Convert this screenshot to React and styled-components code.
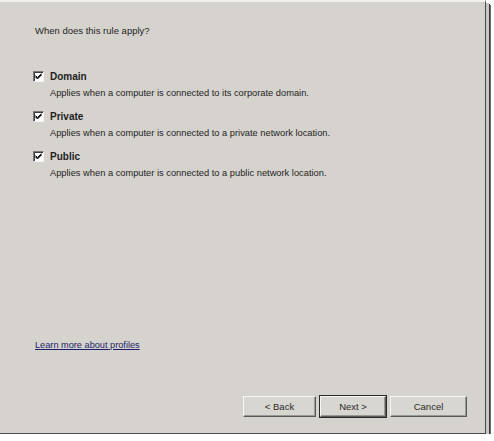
import React from 'react';
import styled, { createGlobalStyle } from 'styled-components';

const GlobalStyle = createGlobalStyle`
  html, body {
    margin: 0;
    padding: 0;
    background: #ffffff;
  }
  body {
    font-family: "Liberation Sans", Arial, sans-serif;
  }
`;

const Frame = styled.div`
  width: 486px;
  height: 434px;
  box-sizing: border-box;
  background: #d6d3ce;
  border-top: 2px solid #f2f1ef;
  border-right: 1px solid #4a4a4a;
  border-bottom: 1px solid #4a4a4a;
  box-shadow: 3px 3px 0 0 #c9c7c3, 4px 4px 0 0 #3c3c3c, 5px 5px 0 0 #6a6a6a;
  display: flex;
  flex-direction: column;
  padding: 23px 0 16px 35px;
  color: #1e1e1e;
  font-size: 9.5px;
`;

const Question = styled.div`
  margin-bottom: 35px;
`;

const Profiles = styled.div`
  display: flex;
  flex-direction: column;
  gap: 13px;
  margin-left: -2px;
`;

const Profile = styled.div`
  display: grid;
  grid-template-columns: 17px auto;
  row-gap: 6px;
  align-items: center;
`;

const Box = styled.span`
  width: 11px;
  height: 11px;
  box-sizing: border-box;
  background: #fff;
  border-top: 1px solid #7a7876;
  border-left: 1px solid #7a7876;
  border-right: 1px solid #f4f4f4;
  border-bottom: 1px solid #f4f4f4;
  box-shadow: inset 1px 1px 0 #3a3a3a;
  display: flex;
  align-items: center;
  justify-content: center;
`;

const Label = styled.span`
  font-weight: bold;
  font-size: 10px;
`;

const Desc = styled.span`
  grid-column: 2;
  font-size: 9.3px;
`;

const Spacer = styled.div`
  flex: 1;
`;

const Link = styled.a`
  color: #1c1f6b;
  font-size: 9.2px;
  text-decoration: underline;
  margin-bottom: 46px;
`;

const Buttons = styled.div`
  display: flex;
  justify-content: flex-end;
  gap: 4px;
  padding-right: 18px;
`;

const Button = styled.button`
  width: ${(p) => p.w}px;
  height: 21px;
  box-sizing: border-box;
  background: #d8d6d1;
  font-family: "Liberation Sans", Arial, sans-serif;
  font-size: 9.5px;
  color: #2a2a2a;
  padding: 0;
  border-top: 1px solid #f6f6f4;
  border-left: 1px solid #f6f6f4;
  border-right: 1px solid #5a5a5a;
  border-bottom: 1px solid #5a5a5a;
  box-shadow: ${(p) =>
    p.primary ? '0 0 0 1px #2a2a2a, inset -1px -1px 0 #9a9895' : 'inset -1px -1px 0 #9a9895'};
`;

const Check = () => (
  <svg width="7" height="7" viewBox="0 0 7 7">
    <path d="M0.5 2.5 L2.5 4.5 L6.5 0.5 M0.5 3.5 L2.5 5.5 L6.5 1.5 M0.5 4 L2.5 6 L6.5 2" stroke="#111" strokeWidth="1" fill="none" />
  </svg>
);

const profiles = [
  { name: 'Domain', desc: 'Applies when a computer is connected to its corporate domain.' },
  { name: 'Private', desc: 'Applies when a computer is connected to a private network location.' },
  { name: 'Public', desc: 'Applies when a computer is connected to a public network location.' },
];

export default function App() {
  return (
    <>
      <GlobalStyle />
      <Frame>
        <Question>When does this rule apply?</Question>
        <Profiles>
          {profiles.map((p) => (
            <Profile key={p.name}>
              <Box>
                <Check />
              </Box>
              <Label>{p.name}</Label>
              <Desc>{p.desc}</Desc>
            </Profile>
          ))}
        </Profiles>
        <Spacer />
        <Link href="#">Learn more about profiles</Link>
        <Buttons>
          <Button w={73}>&lt; Back</Button>
          <Button w={66} primary>Next &gt;</Button>
          <Button w={77}>Cancel</Button>
        </Buttons>
      </Frame>
    </>
  );
}
